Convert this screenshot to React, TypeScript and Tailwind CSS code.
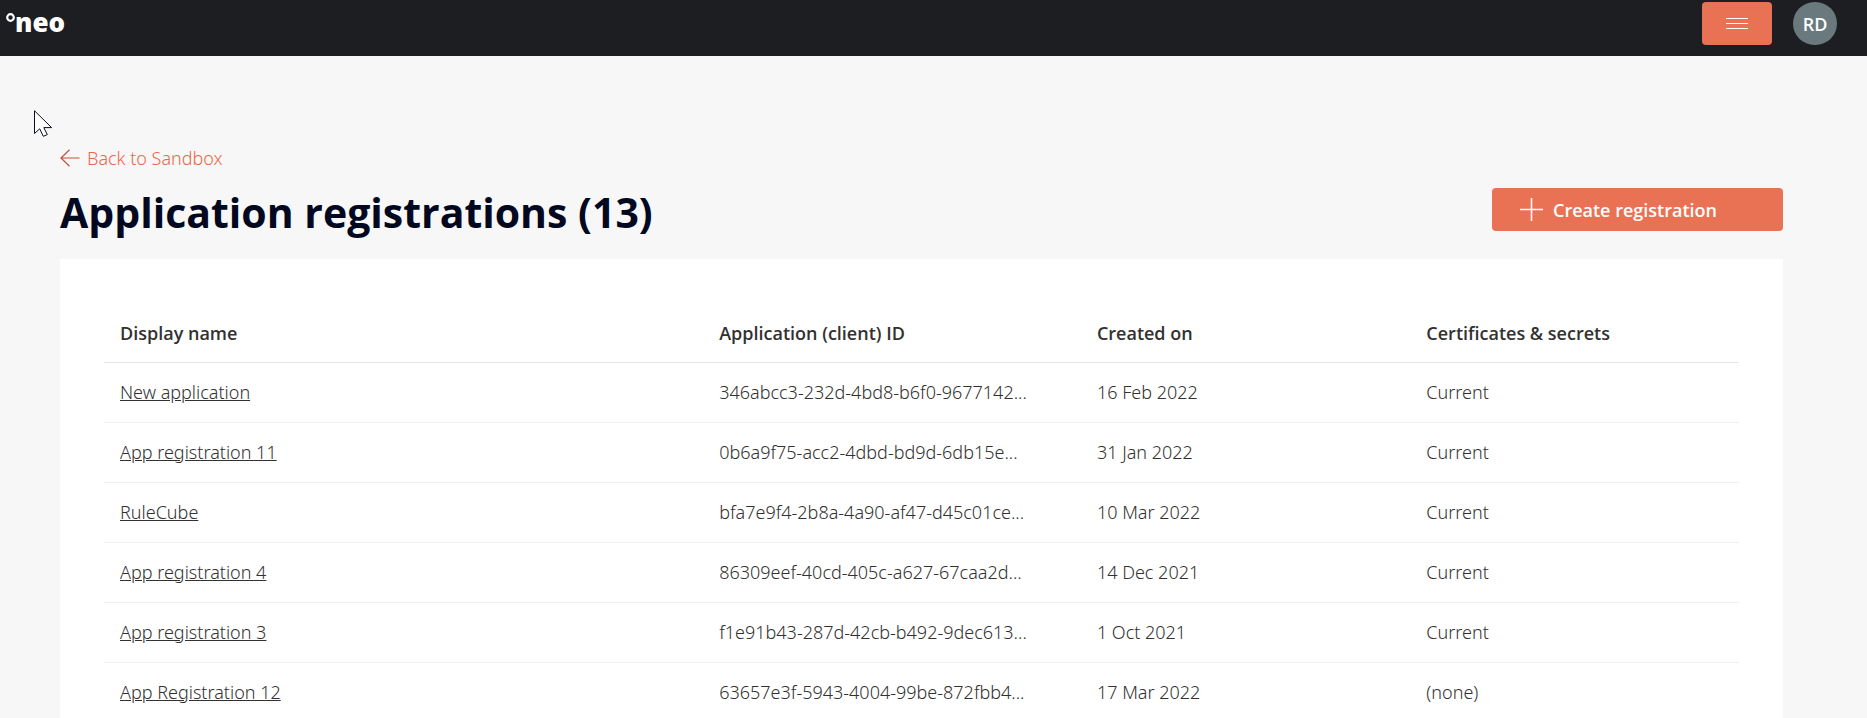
type Registration = {
  name: string;
  clientId: string;
  created: string;
  secrets: string;
};

const registrations: Registration[] = [
  { name: "New application", clientId: "346abcc3-232d-4bd8-b6f0-9677142...", created: "16 Feb 2022", secrets: "Current" },
  { name: "App registration 11", clientId: "0b6a9f75-acc2-4dbd-bd9d-6db15e...", created: "31 Jan 2022", secrets: "Current" },
  { name: "RuleCube", clientId: "bfa7e9f4-2b8a-4a90-af47-d45c01ce...", created: "10 Mar 2022", secrets: "Current" },
  { name: "App registration 4", clientId: "86309eef-40cd-405c-a627-67caa2d...", created: "14 Dec 2021", secrets: "Current" },
  { name: "App registration 3", clientId: "f1e91b43-287d-42cb-b492-9dec613...", created: "1 Oct 2021", secrets: "Current" },
  { name: "App Registration 12", clientId: "63657e3f-5943-4004-99be-872fbb4...", created: "17 Mar 2022", secrets: "(none)" },
];

function TopBar() {
  return (
    <header className="flex h-14 shrink-0 items-start justify-between bg-[#1c1e22] pt-0.5 pr-[30px] pl-1.5">
      <a href="#" className="flex items-start text-white">
        <svg className="mt-[11px] h-[9px] w-[9px]" viewBox="0 0 9 9" fill="none" aria-hidden="true">
          <circle cx="4.5" cy="4.5" r="3.3" stroke="currentColor" strokeWidth="2.2" />
        </svg>
        <span className="pt-1 font-['Open_Sans',sans-serif] text-[26px] leading-8 font-extrabold">neo</span>
      </a>
      <div className="flex items-start gap-[21px]">
        <button type="button" aria-label="Menu" className="flex h-[43px] w-[70px] items-center justify-center rounded-sm bg-[#e97254] text-white">
          <svg className="h-3 w-[22px]" viewBox="0 0 22 12" fill="none" stroke="currentColor" aria-hidden="true">
            <path d="M0 .5h22M0 5.500h22M0 10.500h22" />
          </svg>
        </button>
        <button type="button" aria-label="Account" className="h-[43px] w-[44px] rounded-full bg-[#69797e] text-lg leading-none font-semibold text-white">
          RD
        </button>
      </div>
    </header>
  );
}

function Pointer() {
  return (
    <svg className="absolute top-[110px] left-[34px] h-[27px] w-[19px]" viewBox="0 0 19 27" aria-hidden="true">
      <path d="M.5.8v22.7l5.2-4.7 3.6 7.5 4-1.7-3.5-7h7.8z" fill="#fff" stroke="#0b0b26" strokeWidth="1" />
    </svg>
  );
}

export default function App() {
  return (
    <div className="relative flex h-screen flex-col overflow-hidden bg-[#f7f7f7] font-['Open_Sans','Noto_Sans',sans-serif] text-[#323130]">
      <TopBar />
      <Pointer />
      <main className="min-h-0 flex-1 overflow-hidden pt-[88px] pr-[84px] pl-[60px]">
        <a href="#" className="inline-flex items-center gap-[7px] font-['Noto_Sans','Open_Sans',sans-serif] text-lg leading-7 font-[350] text-[#e8684a]">
          <svg className="h-[18px] w-5" viewBox="0 0 20 18" fill="none" stroke="#c8503a" strokeWidth="1.2" aria-hidden="true">
            <path d="M19.5 9H1M9.5.8 1 9l8.500 8.200" />
          </svg>
          Back to Sandbox
        </a>
        <div className="flex items-start justify-between pt-1.5">
          <h1 className="text-[41px] leading-[66px] font-bold text-[#010820]">Application registrations (13)</h1>
          <button type="button" className="mt-[9px] flex h-[43px] w-[291px] items-center gap-2.5 rounded-sm bg-[#e97254] pl-7 text-lg font-semibold text-white">
            <svg className="h-[23px] w-[23px]" viewBox="0 0 23 23" fill="none" stroke="currentColor" strokeWidth="1.6" aria-hidden="true">
              <path d="M11.500 0v23M0 11.500h23" />
            </svg>
            Create registration
          </button>
        </div>
        <section className="mt-3.5 bg-white px-11 pt-[43px]">
          <table className="w-full table-fixed border-collapse text-left text-lg">
            <thead>
              <tr className="h-15 border-b border-[#e6e6e6]">
                <th className="w-[36.65%] px-4 pt-0.5 font-semibold">Display name</th>
                <th className="w-[23.1%] px-4 pt-0.5 font-semibold">Application (client) ID</th>
                <th className="w-[20.15%] px-4 pt-0.5 font-semibold">Created on</th>
                <th className="px-4 pt-0.5 font-semibold">Certificates &amp; secrets</th>
              </tr>
            </thead>
            <tbody className="font-['Noto_Sans','Open_Sans',sans-serif]">
              {registrations.map((r) => (
                <tr key={r.clientId} className="h-15 border-b border-[#efefef] font-[350]">
                  <td className="px-4">
                    <a href="#" className="underline">{r.name}</a>
                  </td>
                  <td className="px-4 whitespace-nowrap">{r.clientId}</td>
                  <td className="px-4">{r.created}</td>
                  <td className="px-4">{r.secrets}</td>
                </tr>
              ))}
            </tbody>
          </table>
        </section>
      </main>
    </div>
  );
}
